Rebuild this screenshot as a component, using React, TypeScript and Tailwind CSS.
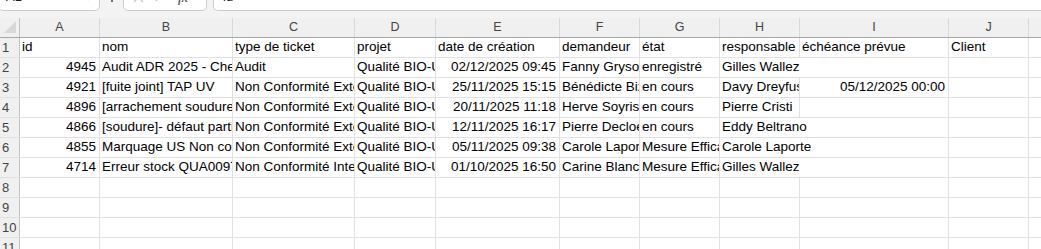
import React from "react";

type Cell = {
  v?: string;
  right?: boolean; // right aligned (numbers, dates)
  spill?: boolean; // text runs into the empty cell on its right
};

const cols = ["A", "B", "C", "D", "E", "F", "G", "H", "I", "J"];
const widths = ["w-[80px]", "w-[133px]", "w-[122px]", "w-[81px]", "w-[124px]", "w-[80px]", "w-[80px]", "w-[80px]", "w-[149px]", "w-[80px]"];

const rows: Cell[][] = [
  [
    { v: "id" }, { v: "nom" }, { v: "type de ticket" }, { v: "projet" },
    { v: "date de création" }, { v: "demandeur" }, { v: "état" },
    { v: "responsable" }, { v: "échéance prévue" }, { v: "Client" },
  ],
  [
    { v: "4945", right: true }, { v: "Audit ADR 2025 - Checklist" }, { v: "Audit" },
    { v: "Qualité BIO-UV" }, { v: "02/12/2025 09:45", right: true },
    { v: "Fanny Grysolle" }, { v: "enregistré" }, { v: "Gilles Wallez", spill: true }, {}, {},
  ],
  [
    { v: "4921", right: true }, { v: "[fuite joint] TAP UV" }, { v: "Non Conformité Externe" },
    { v: "Qualité BIO-UV" }, { v: "25/11/2025 15:15", right: true },
    { v: "Bénédicte Bizet" }, { v: "en cours" }, { v: "Davy Dreyfus" },
    { v: "05/12/2025 00:00", right: true }, {},
  ],
  [
    { v: "4896", right: true }, { v: "[arrachement soudure] raccord" }, { v: "Non Conformité Externe" },
    { v: "Qualité BIO-UV" }, { v: "20/11/2025 11:18", right: true },
    { v: "Herve Soyris" }, { v: "en cours" }, { v: "Pierre Cristi" }, {}, {},
  ],
  [
    { v: "4866", right: true }, { v: "[soudure]- défaut partiel" }, { v: "Non Conformité Externe" },
    { v: "Qualité BIO-UV" }, { v: "12/11/2025 16:17", right: true },
    { v: "Pierre Decloedt" }, { v: "en cours" }, { v: "Eddy Beltrano", spill: true }, {}, {},
  ],
  [
    { v: "4855", right: true }, { v: "Marquage US Non conforme" }, { v: "Non Conformité Externe" },
    { v: "Qualité BIO-UV" }, { v: "05/11/2025 09:38", right: true },
    { v: "Carole Laporte" }, { v: "Mesure Efficacité" }, { v: "Carole Laporte", spill: true }, {}, {},
  ],
  [
    { v: "4714", right: true }, { v: "Erreur stock QUA0097" }, { v: "Non Conformité Interne" },
    { v: "Qualité BIO-UV" }, { v: "01/10/2025 16:50", right: true },
    { v: "Carine Blanchard" }, { v: "Mesure Efficacité" }, { v: "Gilles Wallez", spill: true }, {}, {},
  ],
  [], [], [], [],
];

function FormulaBar() {
  return (
    <div className="h-[18px] bg-[#f3f3f3]">
      <div className="flex h-[11px] items-end overflow-hidden">
        {/* name box */}
        <div className="flex h-[28px] w-[102px] -ml-[2px] flex-none items-center justify-between rounded-b-[5px] border border-[#cdcdcd] bg-white pl-[7px] pr-[6px] text-[13px] text-[#222]">
          <span>A1</span>
          <svg width="9" height="6" viewBox="0 0 9 6" className="mt-[2px]">
            <path d="M1 1l3.5 3.5L8 1" stroke="#555" strokeWidth="1.2" fill="none" />
          </svg>
        </div>
        <div className="flex h-[28px] w-[23px] flex-none flex-col items-center justify-center gap-[2px]">
          <span className="h-[2px] w-[2px] rounded-full bg-[#444]" />
          <span className="h-[2px] w-[2px] rounded-full bg-[#444]" />
          <span className="h-[2px] w-[2px] rounded-full bg-[#444]" />
        </div>
        {/* cancel / enter / fx */}
        <div className="flex h-[28px] w-[84px] flex-none items-center rounded-b-[5px] border border-[#cdcdcd] bg-white pl-[9px] text-[#b5b5b5]">
          <svg width="11" height="11" viewBox="0 0 11 11">
            <path d="M1 1l9 9M10 1l-9 9" stroke="#bdbdbd" strokeWidth="1.1" />
          </svg>
          <svg width="12" height="10" viewBox="0 0 12 10" className="ml-[8px]">
            <path d="M1 5l3.5 3.5L11 1" stroke="#bdbdbd" strokeWidth="1.1" fill="none" />
          </svg>
          <span className="ml-[14px] font-['Liberation_Serif',serif] text-[14px] italic text-[#333]">fx</span>
          <svg width="7" height="5" viewBox="0 0 7 5" className="ml-[11px] mt-[2px]">
            <path d="M1 1l2.5 2.5L6 1" stroke="#777" strokeWidth="1" fill="none" />
          </svg>
        </div>
        <div className="ml-[6px] flex h-[28px] flex-1 items-center rounded-bl-[5px] border border-r-0 border-[#cdcdcd] bg-white pl-[9px] text-[13px] text-[#222]">
          id
        </div>
      </div>
    </div>
  );
}

export default function App() {
  return (
    <div className="h-[249px] w-[1041px] overflow-hidden bg-white font-['Liberation_Sans',Arial,sans-serif] text-[13.5px] text-black">
      <FormulaBar />

      {/* column letters */}
      <div className="flex h-[20px] border-b border-[#a8a8a8] bg-[#f0f0f0] text-[12.5px] text-[#444]">
        <div className="relative w-[20px] flex-none border-r border-[#c4c4c4]">
          <svg width="20" height="19" viewBox="0 0 20 19" className="absolute left-0 top-0">
            <polygon points="16,3 16,15 4,15" fill="#d8d8d8" />
          </svg>
        </div>
        {cols.map((c, i) => (
          <div key={c} className={`${widths[i]} flex flex-none items-center justify-center border-r border-[#d9d9d9]`}>
            {c}
          </div>
        ))}
        <div className="flex-1" />
      </div>

      {rows.map((row, r) => (
        <div key={r} className="flex h-[20px] border-b border-[#e1e1e1]">
          <div className="flex w-[20px] flex-none items-center border-r border-[#c4c4c4] bg-[#f0f0f0] pl-[2px] text-[13px] text-[#444]">
            {r + 1}
          </div>
          {cols.map((c, i) => {
            const cell = row[i] ?? {};
            return (
              <div
                key={c}
                className={`${widths[i]} flex flex-none items-center whitespace-nowrap ${
                  cell.spill
                    ? "relative z-10 overflow-visible pl-[2px]"
                    : "overflow-hidden border-r border-[#e1e1e1] " + (cell.right ? "justify-end pr-[3px]" : "pl-[2px]")
                }`}
              >
                {cell.v}
              </div>
            );
          })}
          <div className="flex-1" />
        </div>
      ))}
    </div>
  );
}
